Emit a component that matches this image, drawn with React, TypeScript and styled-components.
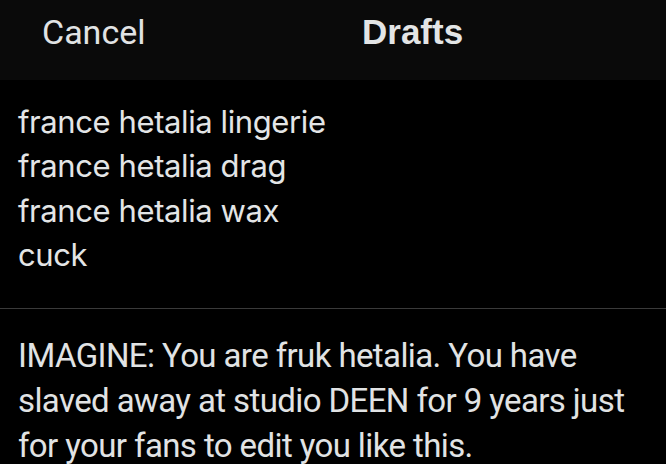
import React from 'react';
import styled, { createGlobalStyle } from 'styled-components';

const Global = createGlobalStyle`
    html, body {
        margin: 0;
        padding: 0;
        background: #000;
    }
`;

const Screen = styled.div({
    width: 666,
    height: 464,
    overflow: 'hidden',
    background: '#000',
    color: '#e3e5e6',
    display: 'flex',
    flexDirection: 'column',
});

const Header = styled.header({
    height: 80,
    flexShrink: 0,
    background: '#0a0a0a',
    display: 'flex',
    alignItems: 'flex-start',
    paddingTop: 12,
    paddingLeft: 42,
    boxSizing: 'border-box',
    lineHeight: '40px',
});

const Cancel = styled.span({
    fontFamily: 'Roboto, "Liberation Sans", sans-serif',
    fontSize: 34,
    color: '#e1e3e4',
    width: 320,
});

const Title = styled.span({
    fontFamily: '"Liberation Sans", Arial, sans-serif',
    fontSize: 35,
    fontWeight: 700,
    color: '#e3e5e6',
});

const Drafts = styled.div({
    padding: '20px 18px 0',
    height: 229,
    flexShrink: 0,
    boxSizing: 'border-box',
    borderBottom: '1px solid #3a3a3a',
    fontFamily: 'Inter, "Noto Sans", sans-serif',
    fontSize: 31,
    letterSpacing: '-0.4px',
    lineHeight: '44.3px',
    p: {
        margin: 0,
    },
});

const Draft = styled.div({
    padding: '24px 20px 0 18px',
    fontFamily: 'Roboto, "Liberation Sans", sans-serif',
    fontSize: 33,
    letterSpacing: '-0.6px',
    lineHeight: '45px',
    color: '#e1e3e4',
});

const lines = [
    'france hetalia lingerie',
    'france hetalia drag',
    'france hetalia wax',
    'cuck',
];

const App = () => {
    return (
        <Screen>
            <Global />
            <Header>
                <Cancel>Cancel</Cancel>
                <Title>Drafts</Title>
            </Header>
            <Drafts>
                {lines.map((l) => (
                    <p key={l}>{l}</p>
                ))}
            </Drafts>
            <Draft>
                IMAGINE: You are fruk hetalia. You have slaved away at studio DEEN for 9 years just
                for your fans to edit you like this.
            </Draft>
        </Screen>
    );
};

export default App;
